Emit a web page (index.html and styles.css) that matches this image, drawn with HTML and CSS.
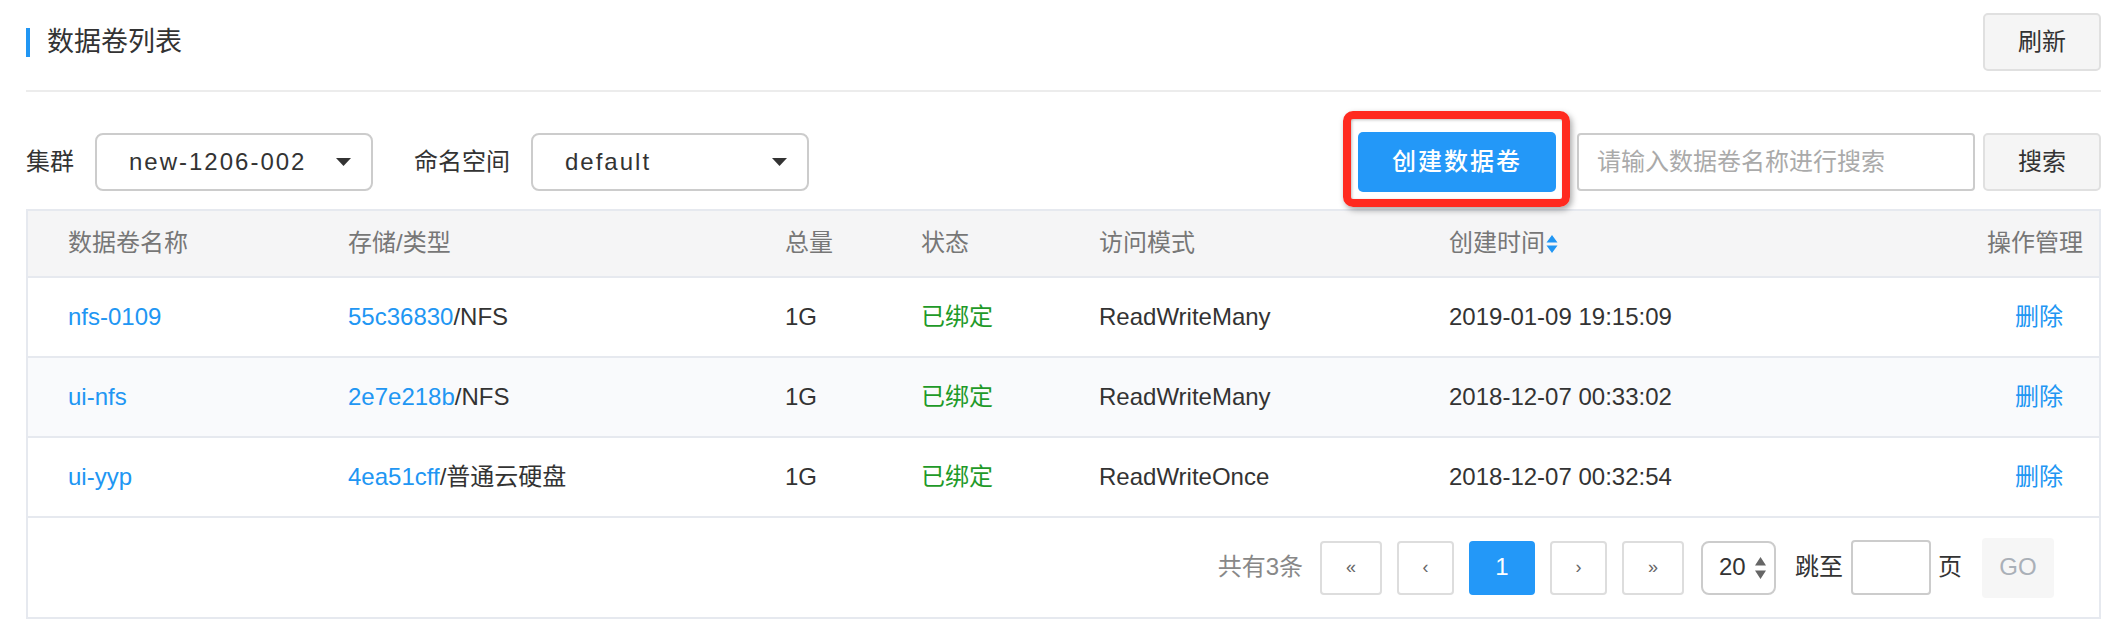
FILE: index.html
```html
<!DOCTYPE html>
<html lang="zh-CN">
<head>
  <meta charset="UTF-8" />
  <title>数据卷列表</title>
  <link rel="stylesheet" href="styles.css">
</head>
<body>
  <div class="page">
    <div class="page-head">
      <h2 class="page-title">数据卷列表</h2>
      <button class="btn">刷新</button>
    </div>

    <div class="toolbar">
      <label>集群</label>
      <div class="select">
        <span>new-1206-002</span>
        <svg class="caret" width="15" height="8" viewBox="0 0 15 8"><path d="M0 0h15L7.5 8z" fill="#333"/></svg>
      </div>
      <label class="ns-label">命名空间</label>
      <div class="select">
        <span>default</span>
        <svg class="caret" width="15" height="8" viewBox="0 0 15 8"><path d="M0 0h15L7.5 8z" fill="#333"/></svg>
      </div>

      <div class="create-wrap">
        <button class="btn-primary">创建数据卷</button>
      </div>
      <input class="search-input" type="text" placeholder="请输入数据卷名称进行搜索">
      <button class="btn search-btn">搜索</button>
    </div>

    <div class="table-box">
      <table class="vol-table">
        <colgroup>
          <col style="width:280px">
          <col style="width:437px">
          <col style="width:136px">
          <col style="width:178px">
          <col style="width:350px">
          <col style="width:562px">
          <col>
        </colgroup>
        <thead>
          <tr>
            <th>数据卷名称</th>
            <th>存储/类型</th>
            <th>总量</th>
            <th>状态</th>
            <th>访问模式</th>
            <th>创建时间<svg class="sort" width="12" height="20" viewBox="0 0 12 20"><path d="M6 1l5.5 7.5h-11z M6 19l5.5-7.5h-11z" fill="#2196f3"/></svg></th>
            <th class="op">操作管理</th>
          </tr>
        </thead>
        <tbody>
          <tr>
            <td><a href="#">nfs-0109</a></td>
            <td><a href="#">55c36830</a>/NFS</td>
            <td>1G</td>
            <td class="bound">已绑定</td>
            <td>ReadWriteMany</td>
            <td>2019-01-09 19:15:09</td>
            <td class="op"><a href="#">删除</a></td>
          </tr>
          <tr class="alt">
            <td><a href="#">ui-nfs</a></td>
            <td><a href="#">2e7e218b</a>/NFS</td>
            <td>1G</td>
            <td class="bound">已绑定</td>
            <td>ReadWriteMany</td>
            <td>2018-12-07 00:33:02</td>
            <td class="op"><a href="#">删除</a></td>
          </tr>
          <tr>
            <td><a href="#">ui-yyp</a></td>
            <td><a href="#">4ea51cff</a>/普通云硬盘</td>
            <td>1G</td>
            <td class="bound">已绑定</td>
            <td>ReadWriteOnce</td>
            <td>2018-12-07 00:32:54</td>
            <td class="op"><a href="#">删除</a></td>
          </tr>
        </tbody>
      </table>

      <div class="pager">
        <span class="pg-total">共有3条</span>
        <button class="pg-btn wide">«</button>
        <button class="pg-btn">‹</button>
        <button class="pg-btn active">1</button>
        <button class="pg-btn">›</button>
        <button class="pg-btn wide last">»</button>
        <div class="pg-size">
          <span>20</span>
          <svg width="11" height="22" viewBox="0 0 11 22"><path d="M5.5 0l5.5 8.5h-11z M5.5 22l5.5-8.5h-11z" fill="#666"/></svg>
        </div>
        <span class="pg-jump">跳至</span>
        <input class="pg-input" type="text">
        <span class="pg-unit">页</span>
        <button class="pg-go">GO</button>
      </div>
    </div>
  </div>
</body>
</html>
```

FILE: styles.css
```css
* {
  box-sizing: border-box;
}
body {
  margin: 0;
  font-family: "Liberation Sans", "Noto Sans CJK SC", sans-serif;
  font-size: 24px;
  line-height: 1.2;
  color: #333;
  background-color: #fff;
}
button, input {
  font-family: inherit;
  font-size: inherit;
  line-height: 1.2;
}
.page {
  margin: 0 13px 0 26px;
}
.page-head {
  display: flex;
  align-items: center;
  justify-content: space-between;
  padding: 13px 0 19px;
  border-bottom: 2px solid #ececec;
}
.page-title {
  margin: 0;
  padding-left: 17px;
  font-size: 27px;
  font-weight: normal;
  line-height: 29px;
  border-left: 4px solid #2196f3;
}
.btn {
  width: 118px;
  height: 58px;
  padding: 0;
  color: #333;
  background-color: #f5f5f5;
  border: 2px solid #e0e0e0;
  border-radius: 5px;
}

/* filter row */
.toolbar {
  display: flex;
  align-items: center;
  height: 58px;
  margin: 41px 0 18px;
}
.toolbar label {
  margin-right: 21px;
}
.toolbar .ns-label {
  margin-left: 41px;
}
.select {
  display: flex;
  align-items: center;
  justify-content: space-between;
  width: 278px;
  height: 58px;
  padding: 0 20px 0 32px;
  letter-spacing: 2px;
  border: 2px solid #ccc;
  border-radius: 8px;
}
.create-wrap {
  position: relative;
  margin-left: auto;
}
.create-wrap::after {
  content: "";
  position: absolute;
  left: -15px;
  top: -21px;
  right: -14px;
  bottom: -15px;
  border: 8px solid #ff2a1f;
  border-radius: 10px;
  box-shadow: 2px 3px 6px rgba(0,0,0,0.35), inset 1px 1px 3px rgba(0,0,0,0.25);
  pointer-events: none;
}
.btn-primary {
  display: block;
  width: 198px;
  height: 60px;
  padding: 0;
  color: #fff;
  font-weight: 500;
  letter-spacing: 2px;
  background-color: #2398f8;
  border: none;
  border-radius: 5px;
}
.search-input {
  width: 398px;
  height: 58px;
  margin-left: 21px;
  padding: 0 18px;
  color: #333;
  border: 2px solid #ccc;
  border-radius: 4px;
  outline: none;
}
.search-input::placeholder {
  color: #aaa;
}
.search-btn {
  margin-left: 8px;
}

/* table */
.table-box {
  border: 2px solid #e6e9ef;
}
.vol-table {
  width: 100%;
  border-collapse: collapse;
  table-layout: fixed;
}
.vol-table th,
.vol-table td {
  padding: 0 0 0 40px;
  text-align: left;
  font-weight: normal;
  white-space: nowrap;
}
.vol-table th {
  height: 66px;
  color: #777;
  background-color: #f5f5f6;
  border-bottom: 2px solid #e6e9ef;
}
.vol-table td {
  height: 80px;
  border-bottom: 2px solid #e6e9ef;
}
.vol-table tr.alt td {
  background-color: #f9fafc;
}
.vol-table th.op {
  padding: 0;
  text-align: center;
}
.vol-table td.op {
  padding: 0 0 0 8px;
  text-align: center;
}
.vol-table a {
  color: #2196f3;
  text-decoration: none;
}
.bound {
  color: #1e9a28;
}
.sort {
  margin-left: 1px;
  vertical-align: -3px;
}

/* pagination */
.pager {
  display: flex;
  align-items: center;
  justify-content: flex-end;
  height: 99px;
  padding-right: 45px;
}
.pg-total {
  margin-right: 17px;
  color: #888;
}
.pg-btn {
  display: flex;
  align-items: center;
  justify-content: center;
  width: 57px;
  height: 54px;
  margin-right: 15px;
  padding: 0;
  font-size: 18px;
  color: #666;
  background-color: #fff;
  border: 2px solid #ddd;
  border-radius: 4px;
}
.pg-btn.wide {
  width: 62px;
}
.pg-btn.active {
  width: 66px;
  font-size: 24px;
  color: #fff;
  background-color: #2398f8;
  border-color: #2398f8;
}
.pg-btn.last {
  margin-right: 17px;
}
.pg-size {
  display: flex;
  align-items: center;
  justify-content: space-between;
  width: 75px;
  height: 54px;
  padding: 0 8px 0 16px;
  border: 2px solid #ccc;
  border-radius: 8px;
}
.pg-jump {
  margin: 0 8px 0 19px;
}
.pg-input {
  width: 80px;
  height: 55px;
  border: 2px solid #ccc;
  border-radius: 4px;
  outline: none;
}
.pg-unit {
  margin: 0 20px 0 7px;
}
.pg-go {
  width: 72px;
  height: 60px;
  padding: 0;
  color: #aab0b8;
  background-color: #f6f6f6;
  border: none;
  border-radius: 4px;
}
```
